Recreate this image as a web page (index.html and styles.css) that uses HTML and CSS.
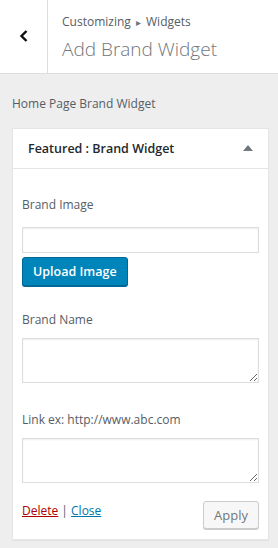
FILE: index.html
```html
<!DOCTYPE html>
<html>
<head>
<meta charset="utf-8">
<link rel="stylesheet" href="styles.css">
</head>
<body>
<header class="top">
  <div class="back">
    <svg width="12" height="14" viewBox="0 0 12 14"><path d="M8.5 2 L3.5 7 L8.5 12" fill="none" stroke="#111" stroke-width="2.4"/></svg>
  </div>
  <div class="titles">
    <div class="crumb">Customizing <span class="tri">&#9656;</span> Widgets</div>
    <div class="title">Add Brand Widget</div>
  </div>
</header>
<main class="panel">
  <div class="area-title">Home Page Brand Widget</div>
  <section class="widget">
    <div class="widget-top">
      <span class="widget-name">Featured : Brand Widget</span>
      <svg class="arrow" width="10" height="6" viewBox="0 0 10 6"><path d="M0 6 L5 0 L10 6 Z" fill="#72777c"/></svg>
    </div>
    <div class="widget-body">
      <label class="lbl lbl-first">Brand Image</label>
      <input class="field" type="text">
      <button class="btn-primary">Upload Image</button>
      <label class="lbl">Brand Name</label>
      <textarea class="area"></textarea>
      <label class="lbl lbl-link">Link ex: http://www.abc.com</label>
      <textarea class="area"></textarea>
      <div class="actions">
        <div class="links"><a class="del" href="#">Delete</a> | <a class="close" href="#">Close</a></div>
        <button class="btn-apply">Apply</button>
      </div>
    </div>
  </section>
</main>
</body>
</html>
```
FILE: styles.css
```css
* { box-sizing: border-box; }
html, body { margin: 0; padding: 0; }
body {
  background: #eeeeee;
  font-family: "Open Sans", "Noto Sans", sans-serif;
  color: #555d66;
  width: 278px;
  height: 548px;
  overflow: hidden;
}
.top {
  display: flex;
  height: 74px;
  background: #fff;
  border-bottom: 1px solid #dddddd;
}
.back {
  width: 48px;
  border-right: 1px solid #dddddd;
  display: flex;
  align-items: center;
  justify-content: center;
  padding-bottom: 2px;
}
.titles {
  padding: 12px 0 0 14px;
}
.crumb {
  font-size: 12px;
  color: #555d66;
  line-height: 20px;
}
.tri { font-size: 10px; color: #72777c; margin: 0 2px; }
.title {
  font-size: 19px;
  font-weight: 300;
  color: #72777c;
  line-height: 28px;
  margin-top: 3px;
}
.panel {
  padding: 0 9px 0 12px;
}
.area-title {
  font-size: 12px;
  color: #555d66;
  line-height: 18px;
  padding-top: 21px;
  height: 54px;
}
.widget {
  background: #fff;
  border: 1px solid #e5e5e5;
  box-shadow: 0 1px 1px rgba(0,0,0,0.04);
}
.widget-top {
  height: 40px;
  border-bottom: 1px solid #e5e5e5;
  display: flex;
  align-items: center;
  justify-content: space-between;
  padding: 0 15px 0 15px;
}
.widget-name {
  font-size: 12.5px;
  font-weight: 600;
  color: #23282d;
}
.arrow { margin-top: -2px; }
.widget-body {
  display: flex;
  flex-direction: column;
  padding: 0 9px 10px 9px;
}
.lbl {
  font-size: 12px;
  color: #555d66;
  line-height: 18px;
  margin-top: 25px;
  margin-bottom: 9px;
}
.lbl-first { margin-top: 27px; margin-bottom: 13px; }
.lbl-link { margin-top: 28px; }
.field {
  height: 26px;
  border: 1px solid #dddddd;
  box-shadow: inset 0 1px 2px rgba(0,0,0,0.07);
  margin: 0;
}
.btn-primary {
  align-self: flex-start;
  margin-top: 4px;
  height: 29px;
  padding: 0 10px;
  background: #0085ba;
  border: 1px solid #006799;
  border-radius: 3px;
  box-shadow: 0 1px 0 #006799;
  color: #fff;
  font-family: inherit;
  font-size: 12.5px;
  font-weight: 600;
}
.area {
  height: 45px;
  border: 1px solid #dddddd;
  box-shadow: inset 0 1px 2px rgba(0,0,0,0.07);
  resize: vertical;
  margin: 0;
}
.actions {
  display: flex;
  justify-content: space-between;
  align-items: flex-start;
  margin-top: 18px;
}
.links {
  font-size: 12px;
  line-height: 18px;
  color: #555d66;
  padding-top: 1px;
}
.del { color: #a00; }
.close { color: #0073aa; }
.btn-apply {
  height: 28px;
  width: 56px;
  background: #f7f7f7;
  border: 1px solid #cccccc;
  border-radius: 3px;
  box-shadow: 0 1px 0 #cccccc;
  color: #72777c;
  font-family: inherit;
  font-size: 13px;
  padding: 0;
}
```
